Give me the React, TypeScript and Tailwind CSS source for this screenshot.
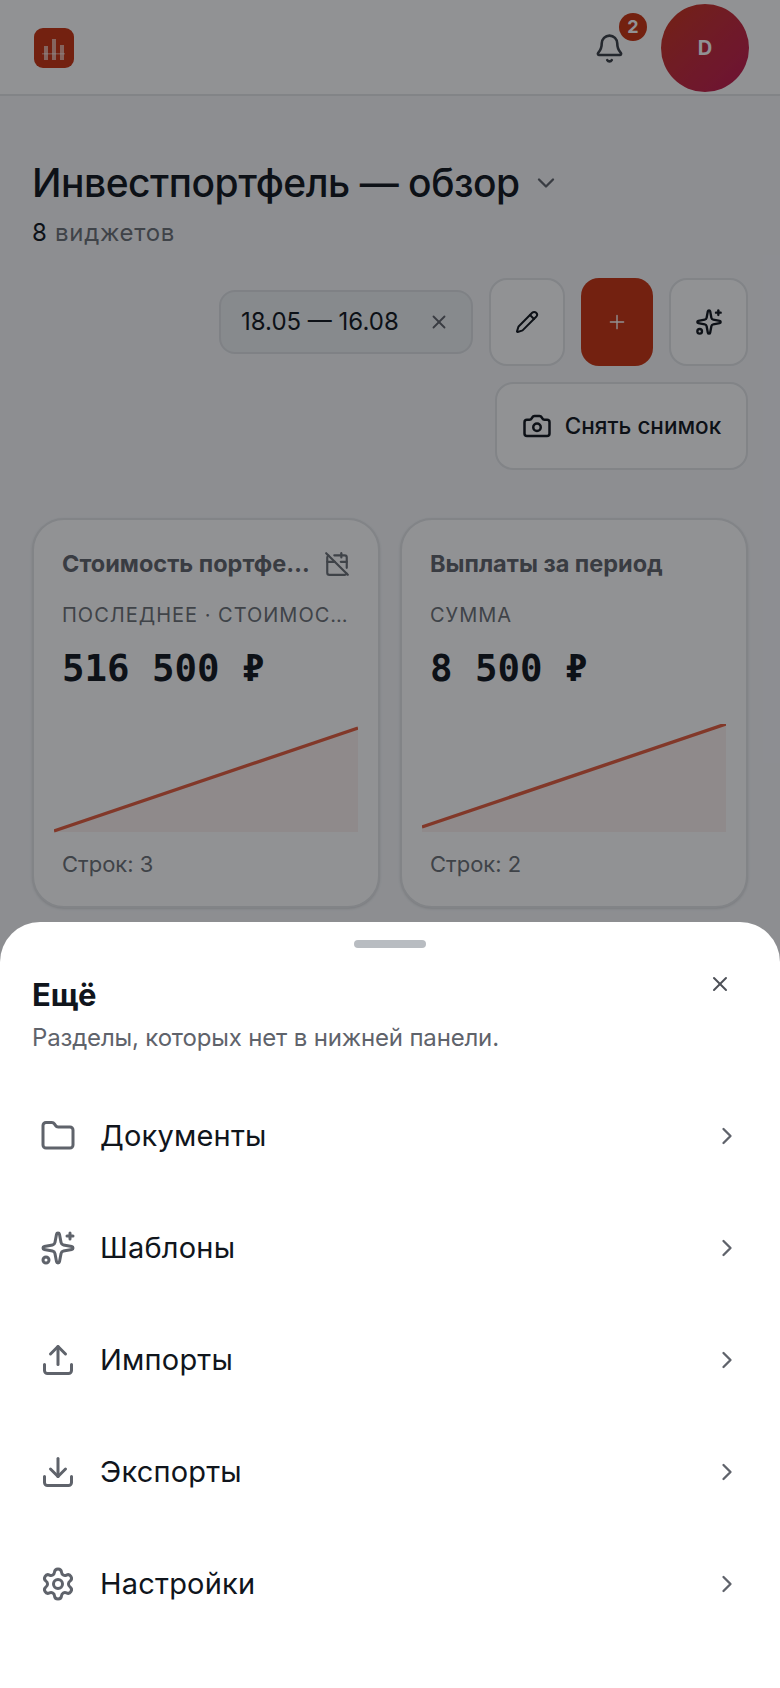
import { Bell, Pencil, Plus, Sparkles, Camera, X, Folder, Upload, Download, Settings, ChevronRight, ChevronDown, CalendarOff } from "lucide-react";

function Chart({ y1 }: { y1: number }) {
  const y0 = y1 + 103;
  return (
    <svg width="304" height="110" viewBox="0 0 304 110" className="block -mx-2">
      <polygon points={`0,${y0} 304,${y1} 304,108 0,108`} fill="#d9301f" fillOpacity="0.07" />
      <line x1="0" y1={y0} x2="304" y2={y1} stroke="#e04a28" strokeWidth="3.4" strokeOpacity="0.9" />
    </svg>
  );
}

function Card({ title, label, value, rows, icon, y1 }: { title: string; label: string; value: string; rows: string; icon?: boolean; y1: number }) {
  return (
    <div className="min-w-0 h-[390px] rounded-[32px] border-2 border-[#e3e5e8] bg-white px-7 pt-[28px] shadow-sm">
      <div className="flex items-center justify-between gap-[12px] h-[32px]">
        <div className="truncate text-[23.5px] font-bold text-[#5f636b] leading-[32px]">{title}</div>
        {icon && <CalendarOff size={26} strokeWidth={2} className="shrink-0 text-[#6b6f76]" />}
      </div>
      <div className="mt-[21px] truncate text-[20px] leading-[28px] uppercase tracking-[1px] text-[#6b6f76]">{label}</div>
      <div className="mt-[15px] font-['DejaVu_Sans_Mono','Liberation_Mono',monospace] text-[37.4px] leading-[48px] font-bold text-[#10151c] whitespace-nowrap">{value}</div>
      <div className="mt-[32px]">
        <Chart y1={y1} />
      </div>
      <div className="mt-[16px] text-[22px] leading-[28px] text-[#6b6f76]">{rows}</div>
    </div>
  );
}

const rowsData = [
  { icon: Folder, label: "Документы" },
  { icon: Sparkles, label: "Шаблоны" },
  { icon: Upload, label: "Импорты" },
  { icon: Download, label: "Экспорты" },
  { icon: Settings, label: "Настройки" },
];

export default function App() {
  return (
    <div className="relative h-[1688px] w-[780px] overflow-hidden bg-[#f7f8fa] font-['Inter','Liberation_Sans',sans-serif]">
      <header className="flex h-[96px] items-center border-b-2 border-[#e3e5e8] bg-white pl-[34px] pr-[31px] pt-[2px]">
        <svg width="40" height="40" viewBox="0 0 40 40" className="block">
          <rect width="40" height="40" rx="9" fill="#c8320f" />
          <rect x="10" y="18" width="4" height="14" fill="#fff" fillOpacity="0.6" />
          <rect x="18" y="11" width="4" height="21" fill="#fff" fillOpacity="0.6" />
          <rect x="26" y="17" width="4" height="15" fill="#fff" fillOpacity="0.6" />
          <rect x="8" y="25" width="23" height="1.5" fill="#fff" fillOpacity="0.4" />
        </svg>
        <div className="ml-auto flex items-center">
          <div className="relative mr-[36px] h-[31px] w-[31px]">
            <Bell size={31} strokeWidth={2} className="text-[#3a3e45]" />
            <div className="absolute -right-[22px] -top-[20px] flex h-[28px] w-[28px] items-center justify-center rounded-full bg-[#c8320f] text-[18px] font-bold text-white">2</div>
          </div>
          <div className="flex h-[88px] w-[88px] items-center justify-center rounded-full bg-gradient-to-br from-[#c8320f] to-[#be1450] text-[20px] font-bold text-white">D</div>
        </div>
      </header>

      <main className="px-[32px]">
        <div className="mt-[62px] flex items-center">
          <h1 className="text-[39px] leading-[50px] font-medium tracking-[-0.5px] text-[#10151c]">Инвестпортфель — обзор</h1>
          <ChevronDown size={28} strokeWidth={2} className="ml-[12px] text-[#5f636b]" />
        </div>
        <div className="mt-[10px] text-[24px] leading-[30px] tracking-[0.7px] text-[#6b6f76]"><span className="text-[#10151c]">8</span> виджетов</div>

        <div className="mt-[30px] flex flex-wrap items-center justify-end gap-x-[16px] gap-y-[16px]">
          <div className="flex h-[64px] w-[254px] items-center justify-between rounded-[16px] border-2 border-[#dee1e4] bg-[#edf0f2] pl-[20px] pr-[21px]">
            <span className="text-[24px] text-[#10151c] whitespace-nowrap">18.05 — 16.08</span>
            <X size={22} strokeWidth={2} className="text-[#5f636b]" />
          </div>
          <div className="flex h-[88px] w-[76px] items-center justify-center rounded-[18px] border-2 border-[#e3e5e8] bg-white">
            <Pencil size={24} strokeWidth={2} className="text-[#10151c]" />
          </div>
          <div className="flex h-[88px] w-[72px] items-center justify-center rounded-[18px] bg-[#c8320f]">
            <Plus size={22} strokeWidth={2} className="text-white/75" />
          </div>
          <div className="flex h-[88px] w-[79px] items-center justify-center rounded-[18px] border-2 border-[#e3e5e8] bg-white">
            <Sparkles size={28} strokeWidth={2} className="text-[#10151c]" />
          </div>
          <div className="flex h-[88px] w-[253px] items-center justify-center gap-[13px] rounded-[18px] border-2 border-[#e3e5e8] bg-white">
            <Camera size={30} strokeWidth={2} className="text-[#10151c]" />
            <span className="text-[22.5px] font-medium text-[#10151c] whitespace-nowrap">Снять снимок</span>
          </div>
        </div>

        <div className="mt-[48px] grid grid-cols-2 gap-x-[20px]">
          <Card icon title="Стоимость портфеля" label="Последнее · Стоимость портфеля" value="516 500 ₽" rows="Строк: 3" y1={4} />
          <Card title="Выплаты за период" label="Сумма" value="8 500 ₽" rows="Строк: 2" y1={0} />
        </div>
      </main>

      <div className="absolute inset-0 bg-[#0b0d12]/45" />

      <section className="absolute inset-x-0 bottom-0 h-[766px] rounded-t-[40px] bg-white px-[32px]">
        <div className="mx-auto mt-[18px] h-[8px] w-[72px] rounded-[4px] bg-[#b8bcc1]" />
        <X size={24} strokeWidth={2} className="absolute right-[48px] top-[50px] text-[#4c5057]" />
        <h2 className="mt-[27px] text-[31px] leading-[40px] font-bold text-[#10151c]">Ещё</h2>
        <p className="mt-[8px] text-[24px] leading-[30px] tracking-[-0.17px] text-[#5f636b]">Разделы, которых нет в нижней панели.</p>
        <ul className="mt-[27px]">
          {rowsData.map(({ icon: Icon, label }) => (
            <li key={label} className="flex h-[112px] items-center pl-[8px] pr-[7px]">
              <Icon size={36} strokeWidth={2} className="text-[#5f636b]" />
              <span className="ml-[24px] text-[29px] tracking-[0.2px] text-[#10151c]">{label}</span>
              <ChevronRight size={28} strokeWidth={2} className="ml-auto text-[#5f636b]" />
            </li>
          ))}
        </ul>
      </section>
    </div>
  );
}
